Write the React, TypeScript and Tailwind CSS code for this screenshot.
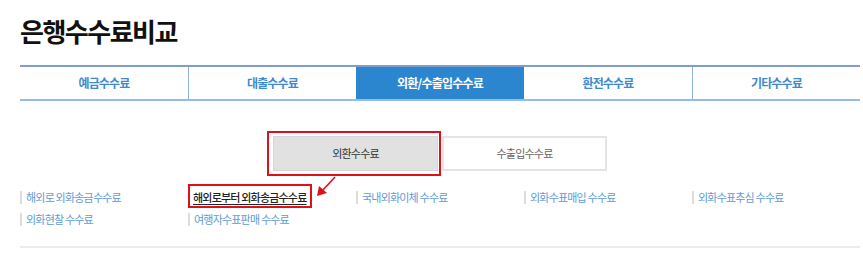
import React from 'react';

const tabs = ['예금수수료', '대출수수료', '외환/수출입수수료', '환전수수료', '기타수수료'];

const links: { label: string; active?: boolean }[] = [
  { label: '해외로 외화송금수수료' },
  { label: '해외로부터 외화송금수수료', active: true },
  { label: '국내외화이체 수수료' },
  { label: '외화수표매입 수수료' },
  { label: '외화수표추심 수수료' },
  { label: '외화현찰 수수료' },
  { label: '여행자수표판매 수수료' },
];

const App: React.FC = () => {
  return (
    <div
      className="w-[863px] h-[254px] bg-white pl-[20px] pr-[3px] overflow-hidden"
      style={{ fontFamily: '"Noto Sans CJK KR", "Noto Sans", sans-serif' }}
    >
      <h1 className="pt-[13px] h-[65px] text-[26px] leading-[36px] font-bold text-[#111] tracking-[-1.5px]">
        은행수수료비교
      </h1>

      <div className="grid grid-cols-5 h-[36px] border-t-2 border-b-2 border-t-[#7e9fcb] border-b-[#94bde6]">
        {tabs.map((t, i) => (
          <div
            key={t}
            className={`flex items-center justify-center text-[12px] font-bold tracking-[-0.8px] ${
              i === 2 ? 'bg-[#2b86cf] text-white' : 'text-[#3d8ad0]'
            } ${i > 0 && i !== 2 && i !== 3 ? 'border-l border-[#8cb2dc]' : ''}`}
          >
            {t}
          </div>
        ))}
      </div>

      <div className="flex justify-center gap-[4px] mt-[35px]">
        <div className="relative">
          <button className="w-[165px] h-[35px] bg-[#e1e1e1] border border-[#d6d6d6] text-[11px] tracking-[-0.8px] text-[#333]">
            외환수수료
          </button>
          <div className="absolute left-[-6px] right-[-3px] top-[-5px] bottom-[-5px] border-2 border-[#e0101b]" />
        </div>
        <button className="w-[165px] h-[35px] bg-white border-2 border-[#e4e4e4] text-[11px] tracking-[-0.8px] text-[#666]">
          수출입수수료
        </button>
      </div>

      <div className="grid grid-cols-5 mt-[19px] gap-y-[8px]">
        {links.map((l) => (
          <div key={l.label} className="relative flex items-center h-[14px]">
            {l.active ? (
              <>
                <span className="ml-[5px] text-[11px] font-medium tracking-[-0.8px] text-[#222] underline underline-offset-2 leading-[14px]">
                  {l.label}
                </span>
                <div className="absolute left-[0px] w-[124px] top-[-6px] bottom-[-4px] border-2 border-[#e0101b]" />
                <svg className="absolute left-[127px] top-[-14px]" width="22" height="22" viewBox="0 0 22 22">
                  <line x1="20" y1="1" x2="7" y2="15" stroke="#e0101b" strokeWidth="1.6" />
                  <polygon points="2,20 4,10 12,17" fill="#e0101b" />
                </svg>
              </>
            ) : (
              <>
                <span className="w-[2px] h-[13px] bg-[#dddddd]" />
                <span className="ml-[4px] text-[11px] tracking-[-0.8px] text-[#5f9bd6] leading-[14px]">{l.label}</span>
              </>
            )}
          </div>
        ))}
      </div>

      <div className="mt-[20px] border-b-2 border-[#ececec]" />
    </div>
  );
};

export default App;
